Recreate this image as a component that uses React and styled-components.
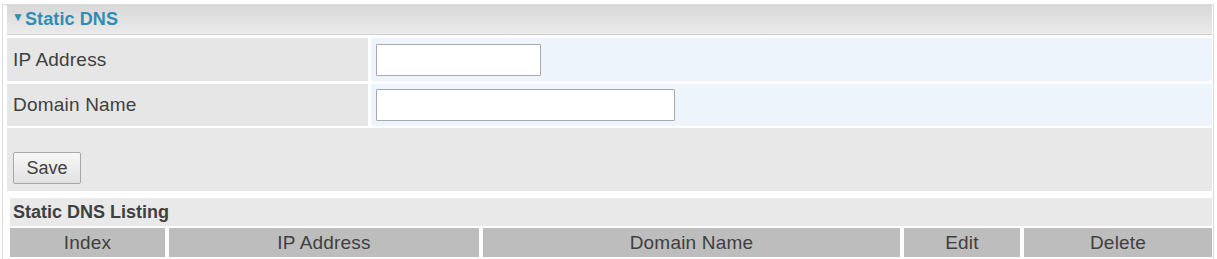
import React from "react";
import styled, { createGlobalStyle } from "styled-components";

const GlobalStyle = createGlobalStyle`
    body {
        margin: 0;
        background: #ffffff;
        font-family: "Liberation Sans", Arial, sans-serif;
        color: #333333;
    }
`;

const Frame = styled.div`
    margin: 4px 3px 0 2px;
    border: 1px solid #dcdcdc;
    border-bottom: none;
    padding: 0 1px 3px 4px;
`;

const TitleBar = styled.div`
    height: 29px;
    display: flex;
    align-items: center;
    padding-left: 5px;
    background: linear-gradient(#d8d8d8, #ebebeb);
    border-bottom: 1px solid #d2d2d2;
    color: #2f8db5;
    font-weight: 700;
    font-size: 18px;
    letter-spacing: 0.1px;
    span {
        font-size: 12px;
        margin-right: 1px;
        position: relative;
        top: -3px;
    }
`;

const FormGrid = styled.div`
    display: grid;
    grid-template-columns: 361px 1fr;
    column-gap: 3px;
    row-gap: 3px;
    margin-top: 3px;
`;

const Label = styled.div`
    height: ${(p) => p.h}px;
    display: flex;
    align-items: center;
    padding-left: 6px;
    background: #e6e6e6;
    font-size: 19px;
    letter-spacing: 0.2px;
    color: #404040;
`;

const Value = styled.div`
    height: ${(p) => p.h}px;
    display: flex;
    align-items: center;
    padding-left: 5px;
    background: #eef4fb;
`;

const TextInput = styled.input`
    box-sizing: border-box;
    width: ${(p) => p.w}px;
    height: 32px;
    border: 1px solid #a9a9a9;
    border-radius: 1px;
    background: #ffffff;
    margin: 0;
`;

const SaveArea = styled.div`
    height: 63px;
    box-sizing: border-box;
    margin-top: 2px;
    padding: 24px 0 0 6px;
    background: #e8e8e8;
`;

const Button = styled.button`
    width: 68px;
    height: 32px;
    border: 1px solid #a8a8a8;
    border-radius: 2px;
    background: linear-gradient(#f8f8f8, #e2e2e2);
    font-family: "Liberation Sans", Arial, sans-serif;
    font-size: 18px;
    color: #404040;
    padding: 0;
`;

const Listing = styled.div`
    margin-top: 7px;
    padding-left: 3px;
`;

const ListingTitle = styled.div`
    height: 28px;
    display: flex;
    align-items: center;
    padding-left: 3px;
    background: #e9e9e9;
    font-weight: 700;
    font-size: 18px;
    color: #404040;
`;

const HeaderRow = styled.div`
    display: grid;
    grid-template-columns: 155px 310px 417px 116px 1fr;
    column-gap: 4px;
    margin-top: 2px;
`;

const HeadCell = styled.div`
    height: 29px;
    display: flex;
    align-items: center;
    justify-content: center;
    background: #bdbdbd;
    font-size: 19px;
    letter-spacing: 0.2px;
    color: #404040;
`;

const columns = ["Index", "IP Address", "Domain Name", "Edit", "Delete"];

export default function App() {
    return (
        <>
            <GlobalStyle />
            <Frame>
                <TitleBar>
                    <span>▼</span>Static DNS
                </TitleBar>
                <FormGrid>
                    <Label h={43}>IP Address</Label>
                    <Value h={43}>
                        <TextInput w={165} />
                    </Value>
                    <Label h={42}>Domain Name</Label>
                    <Value h={42}>
                        <TextInput w={299} />
                    </Value>
                </FormGrid>
                <SaveArea>
                    <Button>Save</Button>
                </SaveArea>
                <Listing>
                    <ListingTitle>Static DNS Listing</ListingTitle>
                    <HeaderRow>
                        {columns.map((c) => (
                            <HeadCell key={c}>{c}</HeadCell>
                        ))}
                    </HeaderRow>
                </Listing>
            </Frame>
        </>
    );
}
